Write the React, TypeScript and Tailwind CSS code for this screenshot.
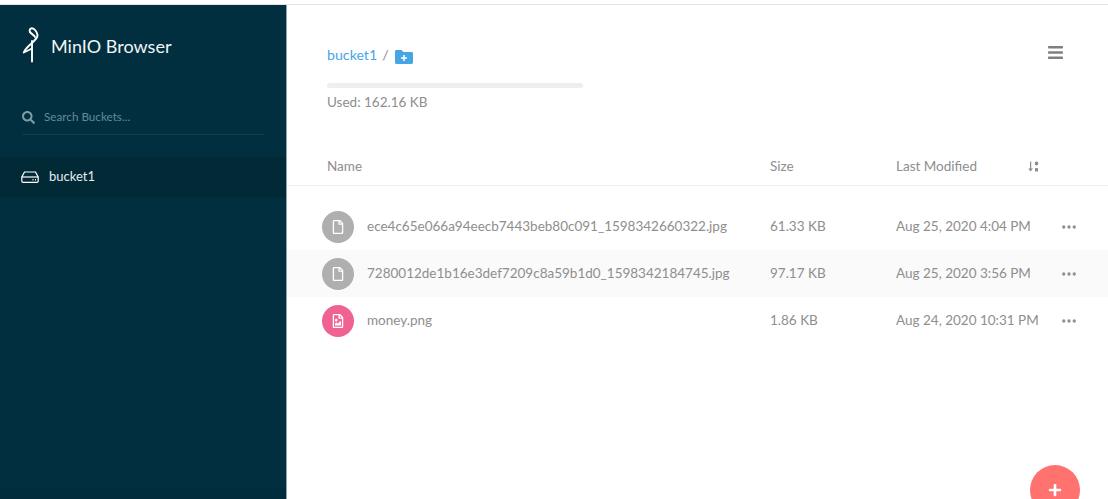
import { MoreHorizontal } from "lucide-react";
import { FaSearch, FaBars, FaRegFile, FaRegFileImage, FaPlus } from "react-icons/fa";

type FileRow = {
  name: string;
  size: string;
  modified: string;
  image?: boolean;
  striped?: boolean;
};

const files: FileRow[] = [
  {
    name: "ece4c65e066a94eecb7443beb80c091_1598342660322.jpg",
    size: "61.33 KB",
    modified: "Aug 25, 2020 4:04 PM",
  },
  {
    name: "7280012de1b16e3def7209c8a59b1d0_1598342184745.jpg",
    size: "97.17 KB",
    modified: "Aug 25, 2020 3:56 PM",
    striped: true,
  },
  {
    name: "money.png",
    size: "1.86 KB",
    modified: "Aug 24, 2020 10:31 PM",
    image: true,
  },
];

const Logo = () => (
  <svg width="18" height="36" viewBox="0 0 18 36" fill="none" stroke="#fff" strokeWidth="1.9" strokeLinecap="round" strokeLinejoin="round">
    <path d="M8 5 C7 3 8 1.2 10 1.2 C12.5 1.2 15 5 15.500 8 C15.800 11 13 13 10.500 15.500 C7 18.500 3 22 1.800 25.500 L10 21.500" />
    <path d="M8 5 C9 7 12.500 8 13 10" />
    <path d="M10 14 V34.500" />
  </svg>
);

const DriveIcon = () => (
  <svg width="18" height="12" viewBox="0 0 18 12" fill="none" stroke="#fff" strokeWidth="1.2">
    <path d="M3.500 1h11l2.700 5v4a1.400 1.400 0 0 1-1.400 1.400H2.200A1.400 1.400 0 0 1 .800 10V6z" />
    <path d="M.800 6h16.400" />
    <path d="M11.500 8.800h1M14 8.800h1" strokeWidth="1.400" />
  </svg>
);

const FolderPlus = () => (
  <svg width="18" height="14" viewBox="0 0 18 14">
    <path d="M1.400 0h5.200l1.800 2h8.200A1.400 1.400 0 0 1 18 3.400v9.200a1.400 1.400 0 0 1-1.400 1.400H1.400A1.400 1.400 0 0 1 0 12.600V1.400A1.400 1.400 0 0 1 1.400 0z" fill="#46a5e5" />
    <path d="M9 5v6M6 8h6" stroke="#fff" strokeWidth="1.600" />
  </svg>
);

const SortIcon = () => (
  <svg width="11" height="11" viewBox="0 0 11 11" fill="#8e8e8e">
    <path d="M2 0.500h1.200v7H5L2.600 10.500 0.200 7.500H2z" />
    <ellipse cx="8.500" cy="2.500" rx="1.800" ry="2" />
    <rect x="7" y="7" width="3" height="3.600" rx="0.600" />
  </svg>
);

const App = () => {
  return (
    <div className="relative flex h-[499px] w-[1108px] flex-col overflow-hidden bg-white font-['Lato','Open_Sans',sans-serif]">
      <div className="h-[5px] border-b border-[#e4e4e4]" />
      <div className="flex flex-1">
        {/* Sidebar */}
        <aside className="flex w-[287px] flex-col border-r border-[#8fa3ad] bg-[#012f40]">
          <div className="flex items-center pl-[22px] pt-[22px]">
            <Logo />
            <span className="ml-[11px] pt-[2px] text-[18px] leading-[34px] text-[#f2f5f6]">MinIO Browser</span>
          </div>
          <div className="mx-[22px] mt-[39px] flex h-[33px] items-center gap-[9px] border-b border-[#0e3f50] pb-[2px]">
            <FaSearch className="text-[13px] text-[#7d9ba6]" />
            <span className="text-[11.700px] text-[#668a96]">Search Buckets...</span>
          </div>
          <div className="mt-[22px] flex h-[40px] items-center gap-[10px] bg-[#012936] pl-[21px]">
            <DriveIcon />
            <span className="text-[13px] text-[#e6ecee]">bucket1</span>
          </div>
          <div className="flex-1" />
          <div className="h-[11px] bg-[#012c3b]" />
        </aside>

        {/* Main */}
        <main className="flex flex-1 flex-col">
          <div className="flex items-start justify-between pl-[40px] pr-[44px] pt-[39px]">
            <div className="w-[256px]">
              <div className="flex h-[22px] items-center text-[14.200px]">
                <span className="text-[#46a5e5]">bucket1</span>
                <span className="ml-[5px] text-[#8e8e8e]">/</span>
                <span className="ml-[6px] mt-[3px]">
                  <FolderPlus />
                </span>
              </div>
              <div className="mt-[17px] h-[5px] rounded-full bg-[#eeeeee]" />
              <div className="mt-[4px] text-[13.500px] leading-[20px] text-[#8e8e8e]">Used: 162.16 KB</div>
            </div>
            <FaBars className="text-[17px] text-[#7f7f7f]" />
          </div>

          <div className="mt-[44px] flex h-[30px] items-start border-b border-[#eeeeee] pl-[40px] text-[13.500px] text-[#8e8e8e]">
            <span className="w-[443px]">Name</span>
            <span className="w-[126px]">Size</span>
            <span className="w-[132px]">Last Modified</span>
            <span className="mt-[5px]">
              <SortIcon />
            </span>
          </div>

          <div className="mt-[17px]">
            {files.map((file) => (
              <div
                key={file.name}
                className={`flex h-[47px] items-center pl-[35px] text-[13.500px] text-[#8e8e8e] ${file.striped ? "bg-[#fafafa]" : ""}`}
              >
                <div
                  className={`flex h-[32px] w-[32px] items-center justify-center rounded-full text-[14px] text-white ${file.image ? "bg-[#f06292]" : "bg-[#afafaf]"}`}
                >
                  {file.image ? <FaRegFileImage /> : <FaRegFile />}
                </div>
                <span className="ml-[13px] w-[403px] whitespace-nowrap">{file.name}</span>
                <span className="w-[126px]">{file.size}</span>
                <span className="w-[164px] whitespace-nowrap">{file.modified}</span>
                <MoreHorizontal className="h-[18px] w-[18px] text-[#8e8e8e]" strokeWidth={2.4} />
              </div>
            ))}
          </div>
        </main>
      </div>

      {/* Floating add button */}
      <button
        type="button"
        className="absolute left-[1030px] top-[465px] flex h-[50px] w-[50px] items-center justify-center rounded-full bg-[#ff726f] text-[14px] text-white"
      >
        <FaPlus />
      </button>
    </div>
  );
};

export default App;
